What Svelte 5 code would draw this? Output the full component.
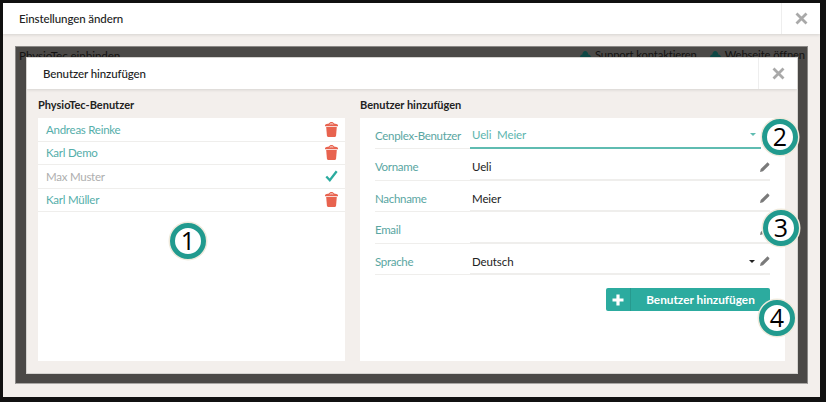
<script>
	const users = [
		{ name: 'Andreas Reinke', active: false },
		{ name: 'Karl Demo', active: false },
		{ name: 'Max Muster', active: true },
		{ name: 'Karl Müller', active: false }
	];
	const fields = [
		{ label: 'Vorname', value: 'Ueli' },
		{ label: 'Nachname', value: 'Meier' },
		{ label: 'Email', value: '' },
		{ label: 'Sprache', value: 'Deutsch', select: true }
	];
	const markers = [
		{ n: 1, cls: 'm1' },
		{ n: 2, cls: 'm2' },
		{ n: 3, cls: 'm3' },
		{ n: 4, cls: 'm4' }
	];
</script>

{#snippet cross()}
	<svg width="13" height="13" viewBox="0 0 13 13"><path d="M1.500 1.500l10 10M11.500 1.500l-10 10" stroke="#a9a9a9" stroke-width="2.800" fill="none" /></svg>
{/snippet}

{#snippet cloud()}
	<svg width="13" height="9" viewBox="0 0 13 9"><path d="M1.500 9h10c1.500 0 2-2.500.3-3.500C11.500 4 10.500 3.500 9.500 3.700 9 1.500 7.700 0 6.300 0 4.800 0 3.500 1.500 3.200 3.700 2.200 3.500 1.300 4.200 1.200 5.500-.3 6.300 0 9 1.500 9z" fill="#0d4744" /></svg>
{/snippet}

{#snippet pencil()}
	<svg class="pencil" width="10" height="10" viewBox="0 0 10 10"><path d="M0 10l.7-3L6.800.9c.4-.4 1-.4 1.400 0l.9.9c.4.4.4 1 0 1.400L3 9.300z" fill="#7a7a7a" /></svg>
{/snippet}

<div class="frame">
	<div class="dialog">
		<header class="head outer-head">
			<span>Einstellungen ändern</span>
			<button class="close">{@render cross()}</button>
		</header>
		<div class="outer-body">
			<div class="backdrop">
				<div class="behind">
					<span>PhysioTec einbinden</span>
					<span class="links">
						{@render cloud()}<span>Support kontaktieren</span>
						{@render cloud()}<span>Webseite öffnen</span>
					</span>
				</div>

				<div class="modal">
					<header class="head inner-head">
						<span>Benutzer hinzufügen</span>
						<button class="close">{@render cross()}</button>
					</header>
					<div class="columns">
						<section class="left">
							<h3>PhysioTec-Benutzer</h3>
							<div class="panel">
								{#each users as u}
									<div class="user" class:active={u.active}>
										<span>{u.name}</span>
										{#if u.active}
											<svg width="13" height="12" viewBox="0 0 13 12"><path d="M1.300 6.500l3.500 3.700L11.700 1.300" stroke="#2bab9f" stroke-width="2.300" fill="none" /></svg>
										{:else}
											<svg width="13" height="15" viewBox="0 0 13 15">
												<path d="M0 3.200C0 2.200 2.800 1.700 4 1.600 4.300.6 5.300 0 6.500 0S8.700.6 9 1.600c1.200.1 4 .6 4 1.600v1.100H0z" fill="#e8634f" />
												<path d="M1.200 5h10.600l-.7 8.500c-.1.9-.6 1.500-1.500 1.500H3.400c-.9 0-1.400-.6-1.500-1.500z" fill="#e8634f" />
												<path d="M4.800 2.400c.4-.8 3-.8 3.400 0" stroke="#fff" stroke-width=".8" fill="none" />
											</svg>
										{/if}
									</div>
								{/each}
							</div>
						</section>
						<section class="right">
							<h3>Benutzer hinzufügen</h3>
							<div class="panel form">
								<div class="row first">
									<span class="label">Cenplex-Benutzer</span>
									<span class="value teal">
										<span>Ueli&nbsp; Meier</span>
										<i class="caret tealcaret"></i>
									</span>
								</div>
								{#each fields as f}
									<div class="row">
										<span class="label">{f.label}</span>
										<span class="value">
											<span>{f.value}</span>
											<span class="tools">
												{#if f.select}<i class="caret"></i>{/if}
												{@render pencil()}
											</span>
										</span>
									</div>
								{/each}
								<div class="actions">
									<button class="add">
										<span class="plus">
											<svg width="12" height="12" viewBox="0 0 12 12"><path d="M6 .5v11M.5 6h11" stroke="#fff" stroke-width="3.200" /></svg>
										</span>
										<span class="caption">Benutzer hinzufügen</span>
									</button>
								</div>
							</div>
						</section>
					</div>
				</div>
			</div>
		</div>
	</div>

	{#each markers as m}
		<div class="marker {m.cls}">{m.n}</div>
	{/each}
</div>

<style>
	:global(body) {
		margin: 0;
		background: #111;
	}
	.frame {
		position: relative;
		width: 826px;
		height: 402px;
		box-sizing: border-box;
		padding: 3px 6px 5px 3px;
		font-family: Lato, "Open Sans", sans-serif;
		font-size: 11.500px;
		letter-spacing: -.1px;
		overflow: hidden;
	}
	.dialog {
		height: 100%;
		display: flex;
		flex-direction: column;
		background: #f3efec;
	}
	.head {
		display: flex;
		justify-content: space-between;
		align-items: stretch;
		background: #fff;
		color: #222;
		font-size: 11.500px;
		font-weight: 500;
		box-shadow: 0 1px 3px rgba(0, 0, 0, .12);
		flex: none;
	}
	.head > span {
		align-self: center;
	}
	.outer-head {
		height: 31px;
		padding-left: 16px;
	}
	.inner-head {
		height: 31px;
		padding-left: 16px;
	}
	.close {
		width: 39px;
		padding: 0;
		border: 0;
		border-left: 1px solid #eee;
		background: none;
		display: flex;
		align-items: center;
		justify-content: center;
	}
	.outer-body {
		flex: 1;
		padding: 12px 12px 13px;
		display: flex;
	}
	.backdrop {
		position: relative;
		flex: 1;
		background: #4b4947;
		border: 1px solid #8a8886;
		border-bottom-color: #a8a6a4;
		box-sizing: border-box;
	}
	.behind {
		display: flex;
		justify-content: space-between;
		padding: 1px 2px 0 3px;
		color: #131211;
		font-size: 11.700px;
		line-height: 14px;
	}
	.links {
		display: flex;
		align-items: center;
		gap: 3px;
		font-size: 11.200px;
	}
	.links span + svg {
		margin-left: 9px;
	}
	.modal {
		position: absolute;
		left: 11px;
		right: 10px;
		top: 11px;
		bottom: 10px;
		background: #f3efec;
		display: flex;
		flex-direction: column;
		outline: 1px solid #d5d3d0;
	}
	.columns {
		flex: 1;
		display: flex;
		gap: 15px;
		padding: 0 12px 12px 11px;
		min-height: 0;
	}
	h3 {
		margin: 0;
		height: 29px;
		line-height: 32px;
		font-size: 11px;
		font-weight: 700;
		letter-spacing: 0;
		color: #222;
		box-sizing: border-box;
	}
	section {
		display: flex;
		flex-direction: column;
	}
	.left {
		width: 307px;
	}
	.right {
		flex: 1;
	}
	.panel {
		flex: 1;
		background: #fff;
	}
	.user {
		height: 22.500px;
		border-bottom: 1px solid #efeeec;
		padding: 0 7px 0 8px;
		display: flex;
		align-items: center;
		justify-content: space-between;
		color: #55aeaa;
		letter-spacing: -.25px;
	}
	.user.active {
		color: #aeaeae;
	}
	.form {
		padding: 0 15px 0 15px;
	}
	.row {
		display: flex;
		height: 31.500px;
	}
	.row.first {
		height: 31px;
	}
	.label {
		width: 95px;
		flex: none;
		color: #5aa6a2;
		line-height: 35px;
		letter-spacing: -.3px;
		white-space: nowrap;
		border-bottom: 1px solid #efeeec;
	}
	.value {
		flex: 1;
		display: flex;
		justify-content: space-between;
		align-items: center;
		padding: 6px 0 0 2px;
		color: #222;
		border-bottom: 2px solid #efeeec;
	}
	.value.teal {
		color: #5bb5ae;
		border-bottom-color: #5fbcb1;
		margin-right: 9px;
		padding-top: 4px;
		padding-right: 5px;
	}
	.tools {
		display: flex;
		align-items: center;
		gap: 5px;
	}
	.pencil {
		display: block;
	}
	.caret {
		width: 0;
		height: 0;
		border: 3px solid transparent;
		border-top-color: #222;
		border-bottom: 0;
	}
	.tealcaret {
		border-top-color: #5fbcb1;
	}
	.actions {
		display: flex;
		justify-content: flex-end;
		padding-top: 13px;
	}
	.add {
		width: 164px;
		height: 23px;
		padding: 0;
		border: 0;
		border-radius: 2px;
		background: #2cab9f;
		color: #fff;
		display: flex;
		align-items: stretch;
		font-family: inherit;
		font-size: 11.800px;
		font-weight: 700;
	}
	.plus {
		width: 24px;
		flex: none;
		border-right: 1px solid #27998e;
		display: flex;
		align-items: center;
		justify-content: center;
	}
	.caption {
		flex: 1;
		align-self: center;
		text-align: center;
		padding-left: 4px;
		padding-right: 4px;
	}
	.marker {
		position: absolute;
		width: 36px;
		height: 36px;
		border-radius: 50%;
		box-sizing: border-box;
		background: #fff;
		border: 5px solid #219a8e;
		box-shadow: 0 0 0 1.500px #efeadc;
		color: #000;
		font-family: "Open Sans", sans-serif;
		font-size: 25px;
		line-height: 25px;
		letter-spacing: 0;
		text-align: center;
	}
	.m1 { left: 170px; top: 223px; }
	.m2 { left: 762px; top: 119px; }
	.m3 { left: 763px; top: 210px; }
	.m4 { left: 759px; top: 300px; }
</style>
